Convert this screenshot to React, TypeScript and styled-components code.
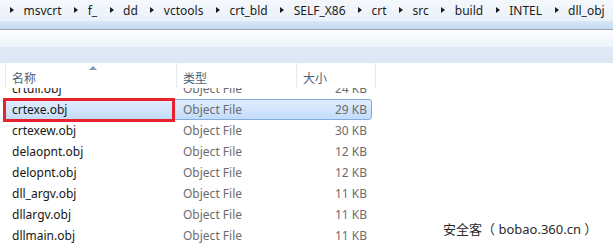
import React from 'react'
import styled, { createGlobalStyle } from 'styled-components'

const crumbs = ['msvcrt', 'f_', 'dd', 'vctools', 'crt_bld', 'SELF_X86', 'crt', 'src', 'build', 'INTEL', 'dll_obj']

const files = [
  { name: 'crtdll.obj', type: 'Object File', size: '24 KB' },
  { name: 'crtexe.obj', type: 'Object File', size: '29 KB', selected: true },
  { name: 'crtexew.obj', type: 'Object File', size: '30 KB' },
  { name: 'delaopnt.obj', type: 'Object File', size: '12 KB' },
  { name: 'delopnt.obj', type: 'Object File', size: '12 KB' },
  { name: 'dll_argv.obj', type: 'Object File', size: '11 KB' },
  { name: 'dllargv.obj', type: 'Object File', size: '11 KB' },
  { name: 'dllmain.obj', type: 'Object File', size: '11 KB' },
]

const GlobalStyle = createGlobalStyle`
  body {
    margin: 0;
    background: #ffffff;
    font-family: "Noto Sans", "Noto Sans CJK SC", sans-serif;
    font-size: 12px;
  }
`

const App: React.FC = () => {
  return (
    <>
      <GlobalStyle />
      <Window>
        <AddressBar>
          {crumbs.map((c) => (
            <Crumb key={c}>
              <Arrow />
              {c}
            </Crumb>
          ))}
        </AddressBar>
        <Band />
        <Toolbar />
        <ListView>
          <Header>
            <HeaderCell $width={171}>
              名称
              <SortArrow />
            </HeaderCell>
            <HeaderCell $width={120}>类型</HeaderCell>
            <HeaderCell $width={80}>大小</HeaderCell>
          </Header>
          <Body>
            <Rows>
              {files.map((f) => (
                <Row key={f.name} $selected={!!f.selected}>
                  <NameCell>{f.name}</NameCell>
                  <TypeCell>{f.type}</TypeCell>
                  <SizeCell>{f.size}</SizeCell>
                </Row>
              ))}
            </Rows>
          </Body>
        </ListView>
        <Highlight />
        <Watermark>安全客（ bobao.360.cn ）</Watermark>
      </Window>
    </>
  )
}

const Window = styled.div`
  position: relative;
  width: 613px;
  height: 245px;
  overflow: hidden;
  display: flex;
  flex-direction: column;
`

const AddressBar = styled.div`
  height: 21px;
  display: flex;
  align-items: center;
  padding-left: 10px;
  background: linear-gradient(#f4f8fc, #eaf1f9);
  color: #1b1b1b;
`

const Crumb = styled.div`
  display: flex;
  align-items: center;
  margin-right: 12.5px;
  line-height: 21px;
  padding-bottom: 1px;
`

const Arrow = styled.span`
  width: 0;
  height: 0;
  border-top: 3.5px solid transparent;
  border-bottom: 3.5px solid transparent;
  border-left: 4px solid #1e1e1e;
  margin-right: 9.5px;
`

const Band = styled.div`
  height: 8px;
  background: linear-gradient(#d8e7f7, #c4dbf3);
  border-bottom: 1px solid #9aa7b7;
`

const Toolbar = styled.div`
  height: 33px;
  background: linear-gradient(#fbfdff 0%, #eef4fb 50%, #dfe9f5 53%, #dde8f4 100%);
`

const ListView = styled.div`
  flex: 1;
  display: flex;
  flex-direction: column;
  background: #ffffff;
  min-height: 0;
`

const Header = styled.div`
  height: 25px;
  display: flex;
  padding-left: 5px;
  flex-shrink: 0;
`

const HeaderCell = styled.div<{ $width: number }>`
  position: relative;
  width: ${(p) => p.$width}px;
  box-sizing: border-box;
  border-left: 1px solid #e3e9f1;
  padding: 6px 0 0 6px;
  color: #4c5e77;
  &:last-child {
    border-right: 1px solid #e3e9f1;
  }
`

const SortArrow = styled.span`
  position: absolute;
  left: 83px;
  top: 3px;
  width: 0;
  height: 0;
  border-left: 4px solid transparent;
  border-right: 4px solid transparent;
  border-bottom: 4px solid #7e9cc0;
`

const Body = styled.div`
  flex: 1;
  overflow: hidden;
`

const Rows = styled.div`
  margin-top: -10px;
`

const Row = styled.div<{ $selected: boolean }>`
  height: 21px;
  width: 368px;
  margin-left: 4px;
  box-sizing: border-box;
  display: flex;
  align-items: center;
  border: 1px solid ${(p) => (p.$selected ? '#84acdd' : 'transparent')};
  border-radius: 3px;
  background: ${(p) => (p.$selected ? 'linear-gradient(#e0edfd, #c3dcfb)' : 'transparent')};
`

const NameCell = styled.div`
  width: 171px;
  padding-left: 7px;
  box-sizing: border-box;
  color: #161616;
`

const TypeCell = styled.div`
  width: 120px;
  padding-left: 7px;
  box-sizing: border-box;
  color: #6d6d6d;
`

const SizeCell = styled.div`
  flex: 1;
  text-align: right;
  padding-right: 4px;
  color: #6d6d6d;
`

const Highlight = styled.div`
  position: absolute;
  left: 3px;
  top: 98px;
  width: 172px;
  height: 24px;
  box-sizing: border-box;
  border: 3px solid #e8222c;
`

const Watermark = styled.div`
  position: absolute;
  left: 443px;
  top: 219px;
  font-size: 13px;
  color: #2a2a2a;
  white-space: pre;
`

export default App
